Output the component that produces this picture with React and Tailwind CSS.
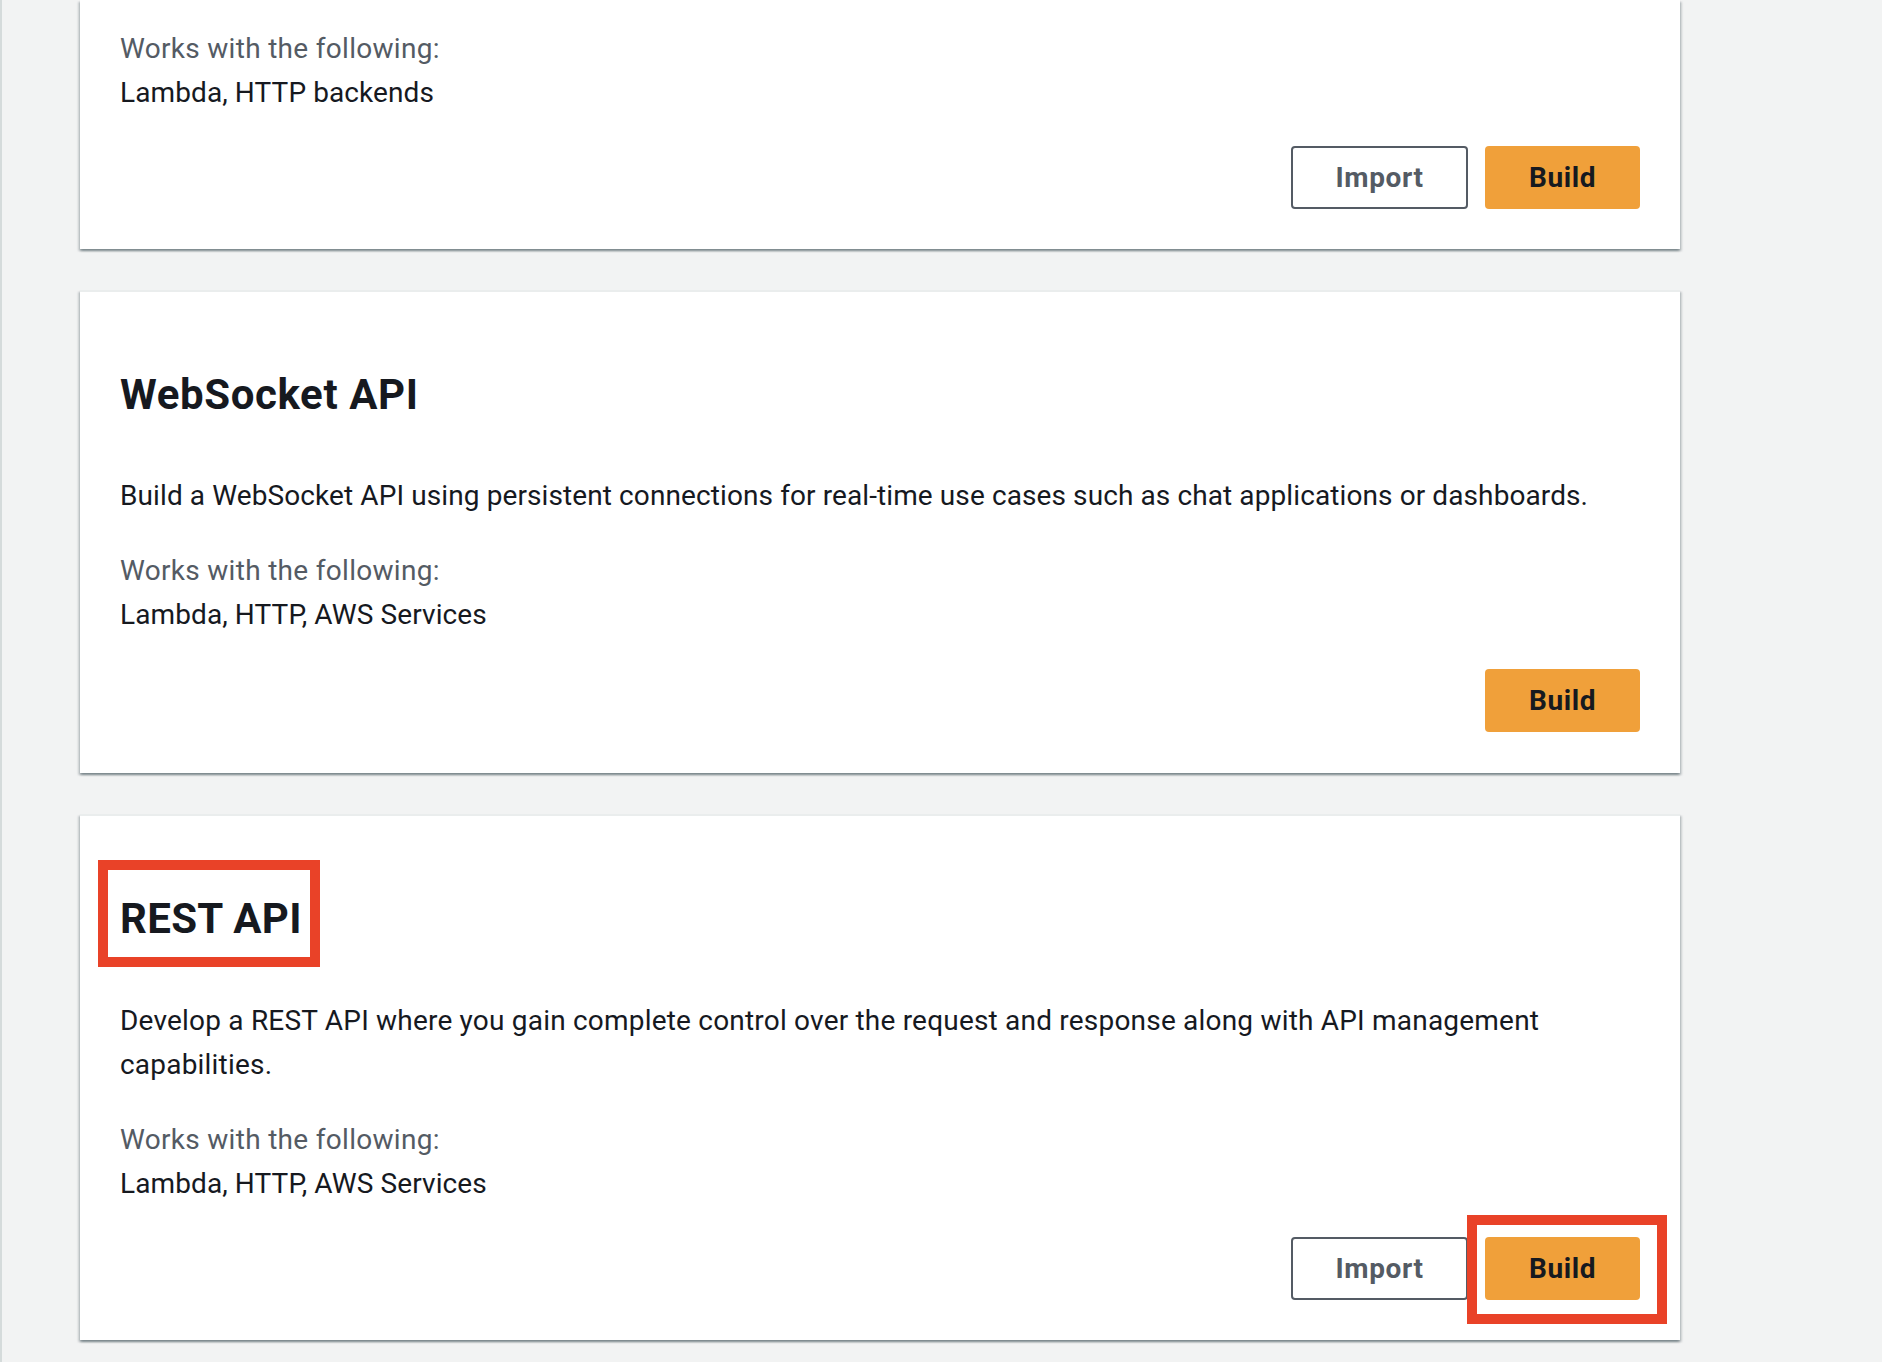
import React from "react";

function Works({ items }) {
  return (
    <div className="mt-[31px]">
      <div className="text-[28px] leading-[44px] text-[#545b64] tracking-[0.3px]">Works with the following:</div>
      <div className="text-[28px] leading-[44px] text-[#16191f]">{items}</div>
    </div>
  );
}

function ImportBtn() {
  return (
    <button className="h-[63px] w-[177px] rounded-[4px] border-2 border-[#545b64] bg-white text-[28px] font-bold text-[#545b64] tracking-[0.6px] flex items-center justify-center">
      Import
    </button>
  );
}

function BuildBtn({ highlight }) {
  return (
    <div className="relative">
      <button className="h-[63px] w-[155px] rounded-[4px] bg-[#f0a03a] text-[28px] font-bold text-[#16191f] tracking-[0.6px] flex items-center justify-center">
        Build
      </button>
      {highlight && (
        <div className="absolute left-[-18px] top-[-22px] w-[200px] h-[109px] border-[10px] border-[#e94228] pointer-events-none" />
      )}
    </div>
  );
}

const card =
  "bg-white w-[1600px] px-[40px] shadow-[0_2px_2px_0_rgba(0,28,36,0.3),2px_2px_2px_0_rgba(0,28,36,0.15),-2px_2px_2px_0_rgba(0,28,36,0.15)]";

export default function App() {
  return (
    <div className="min-h-screen w-full bg-[#f2f3f3] border-l-2 border-[#d5dbdb] overflow-hidden font-['Roboto','Liberation_Sans',sans-serif] tracking-[0.1px]">
      <div className="ml-[78px] flex flex-col gap-[41px] pb-[40px]">
        {/* Card 1 (top clipped) */}
        <div className={`${card} pt-[27px] pb-[40px]`}>
          <div className="text-[28px] leading-[44px] text-[#545b64] tracking-[0.3px]">Works with the following:</div>
          <div className="text-[28px] leading-[44px] text-[#16191f]">Lambda, HTTP backends</div>
          <div className="mt-[31px] flex justify-end gap-[17px]">
            <ImportBtn />
            <BuildBtn />
          </div>
        </div>

        {/* Card 2 */}
        <div className={`${card} border-t-2 border-[#eaeded] pt-[79px] pb-[41px]`}>
          <h2 className="text-[42px] leading-[48px] font-bold text-[#16191f] tracking-[0.6px]">WebSocket API</h2>
          <p className="mt-[55px] text-[28px] leading-[44px] text-[#16191f]">
            Build a WebSocket API using persistent connections for real-time use cases such as chat applications or dashboards.
          </p>
          <Works items="Lambda, HTTP, AWS Services" />
          <div className="mt-[32px] flex justify-end">
            <BuildBtn />
          </div>
        </div>

        {/* Card 3 */}
        <div className={`${card} border-t-2 border-[#eaeded] pt-[79px] pb-[40px]`}>
          <div className="relative inline-block">
            <h2 className="text-[42px] leading-[48px] font-bold text-[#16191f] tracking-[0.3px]">REST API</h2>
            <div className="absolute left-[-22px] top-[-35px] w-[222px] h-[107px] border-[10px] border-[#e94228] pointer-events-none" />
          </div>
          <p className="mt-[56px] text-[28px] leading-[44px] text-[#16191f] tracking-[0.2px]">
            Develop a REST API where you gain complete control over the request and response along with API management
            <br />
            capabilities.
          </p>
          <Works items="Lambda, HTTP, AWS Services" />
          <div className="mt-[31px] flex justify-end gap-[17px]">
            <ImportBtn />
            <BuildBtn highlight />
          </div>
        </div>
      </div>
    </div>
  );
}
